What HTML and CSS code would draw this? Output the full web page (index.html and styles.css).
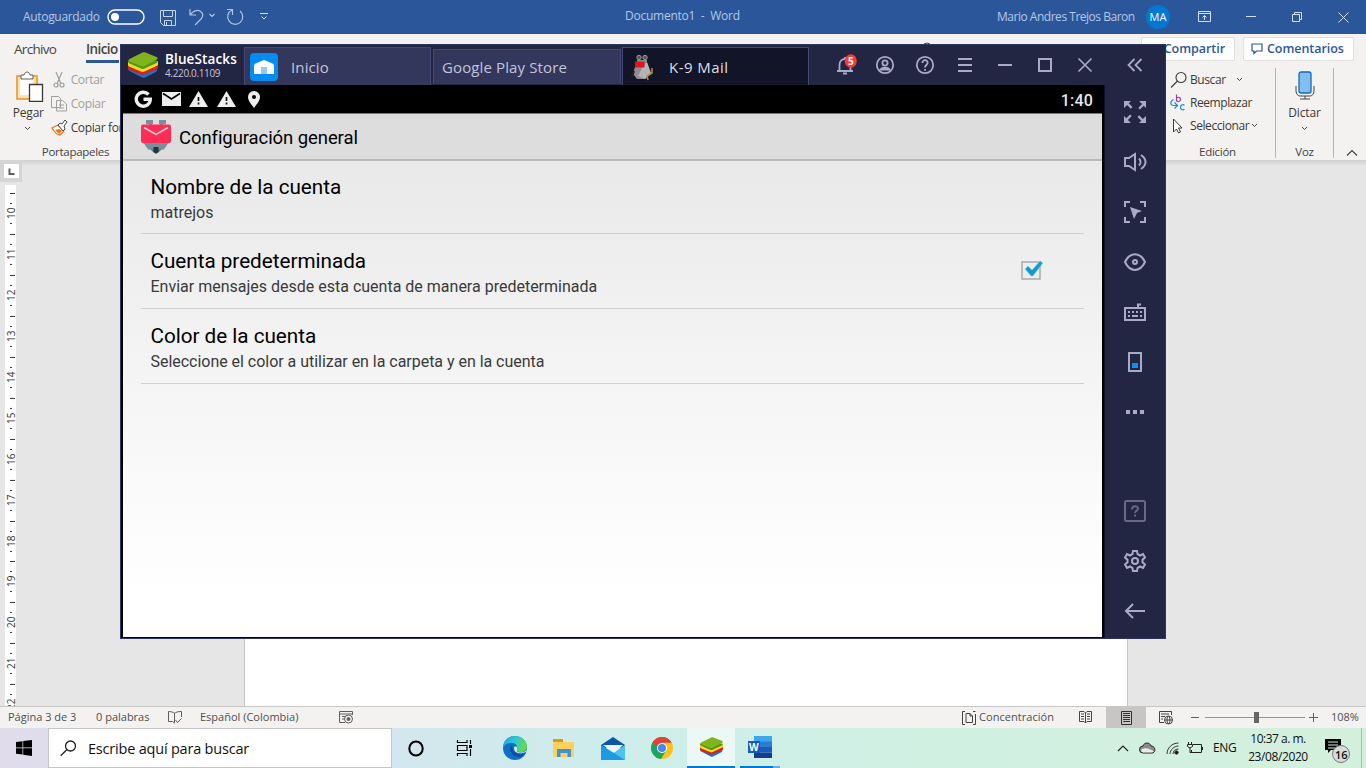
FILE: index.html
```html
<!DOCTYPE html>
<html lang="es">
<head>
<meta charset="utf-8">
<title>Documento1 - Word</title>
<link rel="stylesheet" href="styles.css">
</head>
<body>
<div class="desktop">
  <header class="titlebar">
    <div class="quick">
      <span class="autosave">Autoguardado</span>
      <svg class="toggle" width="39" height="17"><rect x="1" y="1" width="36" height="14" rx="7" fill="none" stroke="#fff" stroke-width="1.4"/><circle cx="8" cy="8" r="4" fill="#fff"/></svg>
      <svg class="save" width="17" height="17" fill="none" stroke="#c5d5ee"><path d="M.5.5h15v15h-12l-3-3zM3.5.5v6h9v-6M4.500 15.500v-5h7v5M6.500 15v-3"/></svg>
      <svg class="undo" width="30" height="18" fill="none" stroke="#aec3e6" stroke-width="1.2"><path d="M1 1v6h6M1.500 6.500C4 3 8 1.500 11 3c4 2.500 3 6 1 8l-6 6M20.500 6l2.500 2.500L25.500 6"/></svg>
      <svg class="redo" width="18" height="18" fill="none" stroke="#aec3e6" stroke-width="1.2"><path d="M1 1.500h5.500v5.500M6 2A7.500 7.500 0 1 0 14 3"/></svg>
      <svg width="10" height="10" fill="none" stroke="#d5e0f2"><path d="M1 1.500h8M2.500 4.500L5 7l2.500-2.500"/></svg>
    </div>
    <div class="doc-title">Documento1 &nbsp;-&nbsp; Word</div>
    <div class="account">
      <span class="user">Mario Andres Trejos Baron</span>
      <span class="avatar">MA</span>
      <svg class="wbtn wb1" width="14" height="12" fill="none" stroke="#d5e0f2"><path d="M.5.500h12v10H.5zM.5 2.500h12M6.500 9V4.500M4.500 6.500l2-2 2 2"/></svg>
      <svg class="wb2" width="11" height="12" stroke="#d5e0f2"><path d="M0 5.500h10"/></svg>
      <svg class="wb3" width="11" height="11" fill="none" stroke="#d5e0f2"><path d="M.5 2.500h7v7h-7zM2.500 2.500v-2h7v7h-2"/></svg>
      <svg width="11" height="11" stroke="#d5e0f2"><path d="M.5.500l10 10M10.500.500l-10 10"/></svg>
    </div>
  </header>

  <section class="ribbon">
    <nav class="tabs">
      <span class="tab file">Archivo</span>
      <span class="tab active">Inicio</span>
      <svg class="search-tip" width="10" height="10" fill="none" stroke="#444"><circle cx="5" cy="5" r="4"/></svg>
      <span class="pill share">Compartir</span>
      <span class="pill comments"><svg width="12" height="12" fill="none" stroke="#2b579a" stroke-width="1.200"><path d="M1 1h10v7H5.500L3 10.500V8H1z"/></svg>Comentarios</span>
    </nav>
    <div class="groups">
      <div class="clipboard">
        <div class="tools">
          <div class="paste">
            <svg width="30" height="31" fill="none"><path d="M2 5h20v23H2z" fill="#fbe3a8" stroke="#e8912d" stroke-width="1.500"/><path d="M5 8h13v16H5z" fill="#fff"/><path d="M6 4h3c1-4 5-4 6 0h3v4H6z" fill="#fff" stroke="#605e5c"/><path d="M14.500 13.500h13v17h-13z" fill="#fff" stroke="#3b3a39" stroke-width="1.300"/></svg>
            <span>Pegar</span>
            <svg width="7" height="5" fill="none" stroke="#444"><path d="M1 1l2.500 2.500L6 1"/></svg>
          </div>
          <div class="clips">
            <div class="clip off"><svg width="18" height="18" fill="none" stroke="#a19f9d" stroke-width="1.200"><path d="M6 1l5 12M12 1L7 13"/><circle cx="6" cy="14" r="2"/><circle cx="12" cy="14" r="2"/></svg><span class="cut">Cortar</span></div>
            <div class="clip off"><svg width="18" height="18" fill="#f3f2f1" stroke="#a19f9d"><path d="M1.500 1.500h7l2 2v9h-9zM6.500 5.500h6l4 3.500v7h-10zM9 10h5M9 13h5"/></svg><span class="cut">Copiar</span></div>
            <div class="clip"><svg width="18" height="18" fill="none"><path d="M2 9l6-3 6 6-4 4c-2 0-5-2-8-7z" fill="#fff" stroke="#e8751a" stroke-width="1.300"/><path d="M5 11l4 4 3-3-3-2z" fill="#e8751a"/><path d="M8 6l2-2 2 1 3-4 2 2-3 4 1 3-2 2z" fill="#fff" stroke="#444"/></svg><span class="cut">Copiar formato</span></div>
          </div>
        </div>
        <div class="caption">Portapapeles</div>
      </div>
      <div class="editing">
        <div class="clip find"><svg width="18" height="18" fill="none" stroke="#3b3a39" stroke-width="1.100"><circle cx="11" cy="6.500" r="5"/><path d="M7.500 10L1 16.500"/></svg>Buscar<svg class="chev" width="7" height="5" fill="none" stroke="#444"><path d="M1 1l2.500 2.500L6 1"/></svg></div>
        <div class="clip repl"><svg width="18" height="18" fill="none"><path d="M6.500.5v7M6.500 4.500c1-2 4-1.500 4 .8 0 2.500-3 3-4 1" stroke="#a33aa8" stroke-width="1.200"/><path d="M14.500 11.200c-2-1.200-4 0-4 2 0 2.200 2 3.300 4 2" stroke="#1e8bcd" stroke-width="1.200"/><path d="M3.500 5.500c-4 2-3 6 0 6h3.500M4.500 8.500l3 3-3 3" stroke="#1e8bcd" stroke-width="1.200"/></svg>Reemplazar</div>
        <div class="clip sel"><svg width="18" height="18" fill="#fff" stroke="#3b3a39"><path d="M3.500 2v13l3-3 2 4 2-1-2-4h3.500z"/></svg>Seleccionar<svg class="chev" width="7" height="5" fill="none" stroke="#444"><path d="M1 1l2.500 2.500L6 1"/></svg></div>
        <div class="caption">Edición</div>
      </div>
      <div class="voice">
        <svg width="20" height="29" fill="none"><rect x="4" y="1" width="12" height="21" rx="2" fill="#83beec" stroke="#0f6cbd" stroke-width="1.300"/><path d="M1 15v5c0 3 2 5 4 5h10c2 0 4-2 4-5v-5M10 25v3M5 28h10" stroke="#444"/></svg>
        <span>Dictar</span>
        <svg class="vchev" width="7" height="5" fill="none" stroke="#444"><path d="M1 1l2.500 2.500L6 1"/></svg>
        <div class="caption">Voz</div>
      </div>
      <svg class="collapse" width="12" height="8" fill="none" stroke="#444" stroke-width="1.200"><path d="M1 6.500l5-5 5 5"/></svg>
    </div>
  </section>

  <main class="canvas">
    <div class="ruler-col">
      <div class="corner"><svg width="15" height="14"><path d="M5.500 4.500v5.500h5" fill="none" stroke="#605e5c" stroke-width="2"/></svg></div>
      <div class="ruler"><i>10</i><i>11</i><i>12</i><i>13</i><i>14</i><i>15</i><i>16</i><i>17</i><i>18</i><i>19</i><i>20</i><i>21</i><i>22</i></div>
    </div>
    <div class="page"></div>
  </main>

  <footer class="status">
    <span class="s-page">Página 3 de 3</span>
    <span class="s-words">0 palabras</span>
    <svg class="s-book" width="15" height="13" fill="none" stroke="#605e5c"><path d="M7 2.500C5 1 3 .5.500.500v10h4l2 1.500V2.500C8 1 10 .5 13.500.500V6M7.500 9l2 2.500 4-4"/></svg>
    <span class="s-lang">Español (Colombia)</span>
    <svg class="s-macro" width="15" height="13" fill="none" stroke="#605e5c"><path d="M6 11.500H.500V.500h13V4M.5 3h13M3 5.500h4M3 8h2"/><circle cx="9.500" cy="8" r="4"/><circle cx="9.500" cy="8" r="1.500" fill="#605e5c"/></svg>
    <svg class="s-focus" width="14" height="14" fill="none" stroke="#444"><path d="M3 .5H.5v13H3M11 .5h2.500M13.500 3v10.500H11M4 2.500h4l2.500 2.500v6.500H4zM8 2.500V5h2.500"/></svg>
    <span class="s-conc">Concentración</span>
    <svg class="s-read" width="14" height="13" fill="none" stroke="#444"><path d="M6.500 2L5 .5H.5v10H5L6.500 12 8 10.500h4.500V.5H8L6.500 2zM6.500 2v10M2 3h3M2 5.500h3M2 8h3M8 3h3M8 5.500h3M8 8h3"/></svg>
    <span class="s-print"><svg width="11" height="14" fill="none" stroke="#333"><path d="M.5.5h10v13H.5zM2 2.500h7M2 4.500h7M2 6.500h7M2 8.500h7M2 10.500h7"/></svg></span>
    <svg class="s-web" width="15" height="14" fill="none" stroke="#444"><path d="M5 11.500H.5V.5h12V4M2 3h8M2 5.500h4M2 8h2"/><circle cx="9.500" cy="9" r="4"/><path d="M5.500 9h8M9.500 5c-2 2-2 6 0 8 2-2 2-6 0-8"/></svg>
    <svg class="s-zoom" width="128" height="14" stroke="#605e5c"><path d="M0 6.500h8M118 6.500h9M122.500 2v9"/><path d="M14 6.500h100" stroke="#979593"/><path d="M63 1h5v11h-5z" fill="#666" stroke="none"/></svg>
    <span class="s-pct">108%</span>
  </footer>

  <footer class="taskbar">
    <span class="start"><svg width="16" height="16" fill="#000"><path d="M0 2l6.500-.8v6.300H0zM7.200 1.100L16 0v7.500H7.200zM0 8.200h6.500v6.300L0 13.700zM7.200 8.200H16V16l-8.800-1.200z"/></svg></span>
    <span class="search"><svg width="17" height="17" fill="none" stroke="#222" stroke-width="1.300"><circle cx="10.500" cy="6" r="5"/><path d="M7 9.500L.7 15.800"/></svg>Escribe aquí para buscar</span>
    <span class="app w48"><svg width="16" height="17"><ellipse cx="8" cy="8.500" rx="6.700" ry="7" fill="none" stroke="#000" stroke-width="2"/></svg></span>
    <span class="app w48"><svg width="17" height="16" fill="none" stroke="#000" stroke-width="1.200"><path d="M1.500 0v2.500h9.500V0M1.500 16v-2.500h9.500V16M1.500 5.500h9.500v5H1.500zM14.500 0v4M14.500 9v7"/><path d="M13 5h3v3h-3z" fill="#000" stroke="none"/></svg></span>
    <span class="app w54"><svg width="24" height="24" viewBox="0 0 24 24"><defs><linearGradient id="eg" x1="0" y1="0" x2="1" y2=".4"><stop offset="0" stop-color="#1a9fd9"/><stop offset=".5" stop-color="#2fc3df"/><stop offset="1" stop-color="#5fdc4e"/></linearGradient></defs><circle cx="12" cy="12" r="12" fill="#0f6fc5"/><path d="M0 12C0 4 6 0 12 0c7 0 12 5 12 10 0 4-3 6-6 6s-5-1-4-3c1-3-1-6-6-6-4 0-7 2-8 5z" fill="url(#eg)"/><path d="M9 9c-4 3-2 11 7 12 3 0 5-2 7-5-2 2-5 3-8 2-4-1-6-4-6-9z" fill="#0b4f9e"/><path d="M11 12c0 4 4 7 12 4l1-3c-1 2-3 3.500-6 3.500s-5-1-4-3.500c.6-2-.5-2.500-1.500-2.500S11 11 11 12z" fill="#d2efec"/></svg></span>
    <span class="app w44"><svg width="22" height="19"><path d="M0 1h9l2 2h10v15H0z" fill="#fdd15c"/><path d="M0 0h10v3H0z" fill="#d99b10"/><path d="M4 18v-8h14v8h-3.500v-4h-7v4z" fill="#3f93d4"/></svg></span>
    <span class="app w54"><svg width="24" height="23"><path d="M0 8l12-8 12 8v3H0z" fill="#0a56a8"/><path d="M2 8h20l-9 9z" fill="#f3f3f3"/><path d="M0 8l13 8L24 8v15H0z" fill="#1c9ae3"/><path d="M13 16L24 8v15z" fill="#4cc4f1"/></svg></span>
    <span class="app w44"><svg width="22" height="22" viewBox="0 0 22 22"><circle cx="11" cy="11" r="11" fill="#fbc116"/><path d="M11 11L1.500 5.500A11 11 0 0 1 20.500 5.500H11z" fill="#dc4437"/><path d="M11 11L1.500 5.500A11 11 0 0 0 10 22l5-8.500z" fill="#1fa463"/><path d="M1.500 5.500A11 11 0 0 1 20.500 5.500H11c-3 0-5 2-5.500 4z" fill="#dc4437"/><circle cx="11" cy="11" r="5" fill="#fff"/><circle cx="11" cy="11" r="4" fill="#4688f1"/></svg></span>
    <span class="app current"><svg width="23" height="20" viewBox="0 0 30 26"><use href="#bs"/></svg></span>
    <span class="app wordapp"><svg width="24" height="22"><path d="M6 0h18v6H6z" fill="#41a5ee"/><path d="M6 5.500h18V11H6z" fill="#2b7cd3"/><path d="M6 11h18v5.500H6z" fill="#185abd"/><path d="M6 16.500h18V22H6z" fill="#103f91"/><path d="M0 5h12v12H0z" fill="#185abd"/><text x="1" y="14.800" class="w">W</text></svg></span>
    <div class="tray">
      <svg class="t-up" width="12" height="8" fill="none" stroke="#222" stroke-width="1.200"><path d="M1 7l5-5 5 5"/></svg>
      <svg class="t-cloud" width="17" height="12"><path d="M4 11a3.500 3.500 0 0 1 0-7C5 0 11 0 12 4c5 0 5 7 1 7z" fill="#8b8b8b" stroke="#222"/><path d="M4 10.500c-3-1-2-4 1-4 3-1 7 1 10 3l-2 1z" fill="#e5eeea"/></svg>
      <svg class="t-wifi" width="13" height="13" fill="none" stroke="#333"><path d="M1 12C1 6 6 1 12.500 1M4 12c0-4 4-8 8.500-8M7 12c0-3 2-5 5.500-5"/><circle cx="10.500" cy="10.500" r="1.700" fill="#111"/></svg>
      <svg class="t-bat" width="17" height="12" fill="none" stroke="#222"><path d="M6 2.500h8.500v8H4.500V8M15.500 5v3M1.500 0v2.500M4.500 0v2.500M.5 2.500h5v2L3 6 .5 4.500zM3 6v4.500h2"/></svg>
      <span class="t-lang">ENG</span>
      <span class="clock"><span>10:37 a. m.</span><span class="date">23/08/2020</span></span>
      <svg class="t-note" width="27" height="26"><path d="M0 1h16v11H6l-3 3v-3H0z" fill="#000"/><path d="M3 4h10M3 7h10M3 10h7" stroke="#d3f0df"/><circle cx="16" cy="16" r="8.500" fill="#d7dcd9" stroke="#777"/><text x="10" y="20.500" class="n">16</text></svg>
    </div>
  </footer>
</div>

<div class="emulator">
  <div class="em-head">
    <svg class="logo" width="30" height="26" viewBox="0 0 30 26"><g id="bs"><path d="M0 15.500L14.500 20 29 14v4c0 1-.5 1.500-1 2l-11 5.500c-1 .5-2 .5-3 0L1.500 19C.5 18.500 0 17 0 15.500z" fill="#1675c9"/><path d="M0 13l14.500 5L30 12v3.500c0 1-.5 1.500-1 1.800L16.500 22.500c-1 .5-2.500.5-3.500 0L1 17.500c-.6-.4-1-1-1-2z" fill="#d7201f"/><path d="M0 9.500L14.500 15 30 9v3c0 1-.5 1.500-1 1.800L16.500 19.500c-1 .5-2.500.5-3.500 0L1 14.500c-.6-.4-1-1-1-2z" fill="#ffd91a"/><path d="M0 9.500L1 8l28 .5c.8 1 .6 2-.4 2.500L16.500 16.500c-1 .5-2.500.5-3.500 0L1.500 11.500C.6 11 0 10.300 0 9.500z" fill="#4c9a20"/><path d="M14 .8c1-.5 2.500-.6 3.500-.2L28.500 5c1.500.7 1.500 2 0 2.800L16.500 14c-1 .5-2.500.5-3.500 0L1.500 9.500C.2 8.800.2 7.800 1.500 7z" fill="#80b41c"/></g></svg>
    <div class="brand"><b>BlueStacks</b><small>4.220.0.1109</small></div>
    <div class="et home"><svg width="28" height="28"><rect width="28" height="28" rx="4" fill="#058cf0"/><path d="M4 13c0-1.500.5-2 1.500-2.500L14 7l8.500 3.500c1 .5 1.500 1 1.500 2.500v8H4z" fill="#fff"/><path d="M11 14h6v7h-6z" fill="#8fcbf8"/></svg>Inicio</div>
    <div class="et store">Google Play Store</div>
    <div class="et k9"><svg width="23" height="27"><path d="M5 9h11l4 11-6 5H6L2 20z" fill="#8d8d8d"/><path d="M11 14l5-6 4 11-6 6-7-3z" fill="#b4b4b4"/><circle cx="8" cy="3.500" r="2.200" fill="#555" stroke="#999"/><circle cx="14" cy="3.500" r="2.200" fill="#555" stroke="#999"/><path d="M6 6h10v3H6z" fill="#888"/><path d="M4 7.500h9.500v6H4z" fill="#e01320"/><path d="M3 17l-2 6" stroke="#222" stroke-width="2"/><path d="M21 14v5l-5 3 1 4" fill="none" stroke="#b98a3a" stroke-width="1.500"/></svg>K-9 Mail</div>
    <div class="em-icons">
      <svg width="40" height="26" viewBox="-20 -13 40 26" fill="none" stroke="#a9aac9" stroke-width="1.800"><path d="M-8 6H8M-5.500 6v-6c0-8 11-8 11 0v6M0-8v2"/><path d="M-2 8.500h4" stroke-width="2"/><ellipse cx="5.800" cy="-4" rx="6" ry="6.800" fill="#fb3b32" stroke="none"/><text x="2.900" y="-.4" class="five">5</text></svg>
      <svg width="40" height="20" viewBox="-20 -10 40 20" fill="none" stroke="#a9aac9" stroke-width="1.800"><circle r="8.200"/><circle cy="-2" r="2.600"/><path d="M-4.500 4.500C-3 2 3 2 4.500 4.500z"/></svg>
      <svg width="40" height="20" viewBox="-20 -10 40 20" fill="none" stroke="#a9aac9" stroke-width="1.800"><circle r="8.200"/><path d="M-2.600-2c0-4 5.500-3.500 5.200 0C2.500 0 0 0 0 2.500M0 4v1.800"/></svg>
      <svg width="40" height="20" viewBox="-20 -10 40 20" stroke="#a9aac9" stroke-width="2"><path d="M-7-6H7M-7 0H7M-7 6H7"/></svg>
      <svg width="40" height="20" viewBox="-20 -10 40 20" stroke="#a9aac9" stroke-width="2"><path d="M-7 0H7"/></svg>
      <svg width="40" height="20" viewBox="-20 -10 40 20" fill="none" stroke="#a9aac9" stroke-width="2"><path d="M-6-6H6V6H-6z"/></svg>
      <svg width="40" height="20" viewBox="-20 -10 40 20" stroke="#a9aac9" stroke-width="1.600"><path d="M-6.500-6.500l13 13M6.500-6.500l-13 13"/></svg>
      <svg class="fold" width="40" height="20" viewBox="-20 -10 40 20" fill="none" stroke="#a9aac9" stroke-width="1.800"><path d="M-.5-6l-6 6 6 6M6.500-6l-6 6 6 6"/></svg>
    </div>
  </div>
  <div class="em-body">
    <div class="screen">
      <div class="android-status">
        <svg class="a-g" width="19" height="19" fill="none" stroke="#eee" stroke-width="3.400"><path d="M14.500 4.500A7 7 0 1 0 16.300 9.300H9.500"/></svg>
        <svg class="a-mail" width="20" height="15"><path d="M0 0h19v14H0z" fill="#eee"/><path d="M1 1.500l8.500 5.500L18 1.500" fill="none" stroke="#000" stroke-width="1.700"/></svg>
        <svg class="a-warn" width="19" height="17"><path d="M9.500 0L19 16H0z" fill="#eee"/><path d="M9.500 6v4M9.500 11.500v2" stroke="#111" stroke-width="1.700"/></svg>
        <svg class="a-warn" width="19" height="17"><path d="M9.500 0L19 16H0z" fill="#eee"/><path d="M9.500 6v4M9.500 11.500v2" stroke="#111" stroke-width="1.700"/></svg>
        <svg width="12" height="18"><path d="M6 0a6 6 0 0 1 6 6c0 4-4 8-6 11C4 14 0 10 0 6a6 6 0 0 1 6-6z" fill="#eee"/><circle cx="6" cy="6" r="2" fill="#000"/></svg>
        <span class="a-time">1:40</span>
      </div>
      <div class="action-bar">
        <svg width="30" height="35"><path d="M5 1h7v4h-1v2H8V5H5zM18 1h7v4h-3v2h-3V5h-1z" fill="#78909c"/><path d="M2 23h26l-5 7.500H7z" fill="#78909c"/><rect y="5.500" width="30" height="18.500" rx="2" fill="#ff2d55"/><path d="M3 8.500l12 7 12-7" fill="none" stroke="#ffd5dc" stroke-width="1.500"/><path d="M9 30h12l-4 4h-4z" fill="#607d8b"/><path d="M12.500 28h5v4.500L15 35l-2.500-2.500z" fill="#263238"/></svg>
        <span>Configuración general</span>
      </div>
      <div class="prefs">
        <div class="pref first"><div><h2>Nombre de la cuenta</h2><p class="p1">matrejos</p></div></div>
        <div class="pref"><div><h2 class="h2b">Cuenta predeterminada</h2><p>Enviar mensajes desde esta cuenta de manera predeterminada</p></div>
          <svg class="check" width="26" height="24"><path d="M3 5h18v17H3z" fill="#eee" stroke="#aaa" stroke-width="1.500"/><path d="M6 12l3-3 4 4 8-9 3 2-10 13h-2z" fill="#159bcb" stroke="#94d9ef" stroke-width=".6"/></svg></div>
        <div class="pref"><div><h2>Color de la cuenta</h2><p class="p3">Seleccione el color a utilizar en la carpeta y en la cuenta</p></div></div>
      </div>
    </div>
    <aside class="side">
      <svg viewBox="-25 -25 50 50"><path d="M-11-11h7l-2.300 2.300 3.800 3.800-1.600 1.600-3.800-3.800L-11-4zM11-11v7L8.700-6.300 4.900-2.500 3.300-4.100l3.800-3.800L4-11zM-11 11V4l2.300 2.300 3.800-3.800 1.600 1.600-3.800 3.800L-4 11zM11 11H4l2.300-2.300L2.500 4.900l1.600-1.600 3.800 3.800L11 4z"/></svg>
      <svg viewBox="-25 -25 50 50" class="ln"><path d="M-10-4h4l6-4V8l-6-4h-4zM4-3.500c2 2 2 5 0 7M6-7c6 4 6 10 0 14"/></svg>
      <svg viewBox="-25 -25 50 50"><path d="M-10-5v-5h5M5-10h5v5M10 5v5H5M-5 10h-5V5" class="l"/><path d="M-5-5L7-1 2 1-1 7z"/></svg>
      <svg viewBox="-25 -25 50 50" class="ln"><path d="M-10 0C-5-10.500 5-10.500 10 0 5 10.500-5 10.500-10 0z"/><circle r="2"/></svg>
      <svg viewBox="-25 -25 50 50"><path d="M-10-4h20V8h-20zM3-4v-3.500h3" class="l"/><path d="M-7-1h2v2h-2zM-3-1h2v2h-2zM1-1h2v2H1zM5-1h2v2H5zM-7 3h2v2h-2zM-3 3h6v2h-6zM5 3h2v2H5z"/></svg>
      <svg viewBox="-25 -25 50 50"><path d="M-6-9H6V9H-6z" class="l"/><path d="M-3 1h6v5h-6z" fill="#0793f5"/></svg>
      <svg viewBox="-25 -25 50 50"><path d="M-9-2h4v4h-4zM-2-2h4v4h-4zM5-2h4v4H5z"/></svg>
      <svg viewBox="-25 -25 50 50" class="dim low"><rect x="-10" y="-10" width="20" height="20" rx="1.500" class="l"/><path d="M-3-1.500c0-4.500 6-4 6-1C3-.5 0 0 0 2M0 3.500v2" class="l"/></svg>
      <svg viewBox="-25 -25 50 50" class="ln"><circle r="3"/><path d="M-2-10h4l.6 3.200 2.400 1.300L8-7l2 3.500L7.500-1.300v2.600L10 3.500 8 7 5 5.500 2.600 6.800 2 10h-4l-.6-3.200L-5 5.500-8 7l-2-3.500 2.500-2.200v-2.600L-10-3.500-8-7l3 1.500 2.400-1.300z"/></svg>
      <svg viewBox="-25 -25 50 50" class="ln"><path d="M10 0H-9M-2-7l-7 7 7 7"/></svg>
    </aside>
  </div>
</div>
</body>
</html>
```

FILE: styles.css
```css
* { box-sizing: border-box; }
body { margin: 0; width: 1366px; height: 768px; overflow: hidden; font: 12px/16px "Open Sans", "Noto Sans", sans-serif; color: #3b3a39; white-space: nowrap; }
svg { display: block; flex: none; }
.desktop { display: flex; flex-direction: column; height: 768px; }

.titlebar { height: 34px; background: #2b579a; color: #b4c7e7; display: grid; grid-template-columns: 625px 372px 1fr; align-items: center; }
.quick, .account { display: flex; align-items: center; }
.quick { padding-left: 23px; }
.autosave { width: 84px; letter-spacing: -.32px; }
.toggle { margin-right: 14px; }
.save { margin-right: 12px; margin-top: 2px; }
.undo { margin-right: 7px; }
.redo { margin-right: 15px; }
.doc-title { margin-top: -3px; letter-spacing: -.25px; }
.user { width: 149px; letter-spacing: -.48px; }
.avatar { width: 24px; height: 24px; border-radius: 50%; background: #0078d4; color: #fff; font-size: 11px; line-height: 24px; text-align: center; }
.wb1 { margin-left: 28px; margin-right: 34px; }
.wb2 { margin-right: 35px; }
.wb3 { margin-right: 35px; }

.ribbon { height: 126px; background: #f3f2f1; display: flex; flex-direction: column; }
.tabs { height: 30px; display: flex; align-items: center; color: #444; font-size: 13.500px; }
.tab { height: 28px; line-height: 29px; letter-spacing: -.6px; margin-top: -1px; }
.file { width: 72px; padding-left: 14px; margin-right: 14px; letter-spacing: -.68px; }
.active { width: 33px; font-weight: 600; border-bottom: 3px solid #2b579a; }
.search-tip { margin: 0 0 0 803px; align-self: flex-start; padding: 0; margin-top: 8px; }
.pill { height: 24px; background: #fff; border: 1px solid #e1dfdd; border-radius: 2px; color: #2b579a; font-weight: 600; font-size: 12.500px; line-height: 20px; letter-spacing: -.05px; display: flex; align-items: center; }
.share { width: 94px; margin-left: auto; justify-content: flex-end; padding-right: 9px; }
.comments { width: 111px; margin: 0 12px 0 8px; padding-left: 7px; gap: 4px; }
.groups { display: flex; height: 96px; padding-top: 3px; }
.clipboard { width: 151px; }
.tools { display: flex; height: 77px; }
.paste { width: 53px; padding: 4px 0 0 5px; display: flex; flex-direction: column; align-items: center; }
.paste > svg:first-child { margin-left: 6px; }
.paste span { margin: 3px 0 5px 2px; letter-spacing: -.2px; }
.clips { padding-top: 1px; }
.clip { display: flex; align-items: center; height: 24px; gap: 2px; letter-spacing: -.35px; }
.cut { padding-left: 1px; }
.off { color: #a19f9d; }
.caption { color: #444; text-align: center; font-size: 11.500px; letter-spacing: -.28px; }
.editing { margin-left: auto; width: 106px; height: 90px; margin-top: 1px; border-right: 1px solid #b5b3b1; }
.editing .clip { height: 23px; letter-spacing: -.42px; }
.editing .caption { margin: 7px 0 0 -10px; }
.find .chev { margin-left: 8px; }
.voice { width: 58px; height: 90px; margin-top: 1px; border-right: 1px solid #b5b3b1; display: flex; flex-direction: column; align-items: center; padding-top: 3px; }
.voice span { margin: 5px 0; letter-spacing: -.1px; }
.voice .caption { margin-top: 13px; }
.collapse { margin: 82px 8px 0 12px; }

.canvas { flex: 1; min-height: 0; background: linear-gradient(#cfcfcf, #e6e6e6 6px); display: flex; overflow: hidden; }
.ruler-col { width: 245px; }
.corner { width: 22px; height: 22px; background: #d5d5d5; display: flex; align-items: center; justify-content: center; }
.corner svg { background: #fff; }
.ruler { margin: 3px 0 0 5px; width: 11px; height: 530px; background: #fff; padding-top: 8px; }
.ruler i { display: flex; align-items: center; justify-content: center; height: 40.950px; width: 11px; font: 10px/9px "Open Sans", sans-serif; color: #333; writing-mode: vertical-rl; transform: rotate(180deg); padding-right: 2px; background: linear-gradient(#333, #333) 4px 10px / 2px 1px no-repeat, linear-gradient(#333, #333) 4px 30px / 2px 1px no-repeat, linear-gradient(#333, #333) 1px 100% / 5px 1px no-repeat; }
.page { width: 884px; background: #fff; border: solid #c6c6c6; border-width: 0 1px; margin-left: -1px; }

.status { height: 22px; background: #f3f2f1; border-top: 1px solid #c8c6c4; display: flex; align-items: center; font-size: 11px; color: #505050; padding-left: 8px; }
.status > span:not(.s-print) { margin-top: -2px; }
.s-page { width: 88px; }
.s-words { width: 72px; }
.s-book { margin-right: 17px; }
.s-lang { width: 139px; }
.s-macro { margin-right: 608px; }
.s-focus { margin-right: 3px; }
.s-conc { width: 100px; letter-spacing: .05px; }
.s-read { margin-right: 13px; }
.s-print { width: 40px; height: 21px; background: #c8c6c4; display: flex; align-items: center; justify-content: center; margin-right: 13px; }
.s-web { margin-right: 17px; }
.s-zoom { margin-right: 12px; }

.taskbar { height: 40px; display: flex; align-items: center; color: #111; background: linear-gradient(90deg, #e0dcec 0, #dce1ee 240px, #d3e7ee 400px, #cdeeea 660px, #d0f0e3 900px, #d4f0dd); }
.start { width: 48px; display: flex; justify-content: center; }
.search { width: 344px; height: 40px; background: #fff; border: 1px solid #c5c5c5; display: flex; align-items: center; gap: 11px; padding: 1px 0 0 11px; font-size: 14.500px; letter-spacing: -.2px; }
.app { height: 40px; display: flex; align-items: center; justify-content: center; }
.w48 { width: 48px; }
.w54 { width: 54px; }
.w44 { width: 44px; }
.current { width: 48px; margin: 0 5px 0 3px; background: #ebf8f6; border-bottom: 2px solid #0078d7; }
.wordapp { width: 40px; border-bottom: 2px solid #0078d7; border-image: linear-gradient(90deg, #0078d7 80%, #65aee5 80%) 2; border-width: 0 0 2px; }
.w { font: 700 10px "Open Sans", sans-serif; fill: #fff; }
.tray { margin-left: auto; margin-right: 4px; padding-right: 9px; height: 40px; display: flex; align-items: center; border-right: 1px solid #a8b8b0; }
.t-up { margin-right: 10px; }
.t-cloud { margin-right: 10px; }
.t-wifi { margin-right: 8px; }
.t-bat { margin-right: 9px; }
.t-note { margin-top: 6px; }
.t-lang { width: 29px; letter-spacing: -.4px; }
.clock { width: 72px; margin-right: 11px; display: flex; flex-direction: column; align-items: center; line-height: 18px; letter-spacing: -.5px; }
.date { letter-spacing: -.4px; }
.n { font: 600 11px "Open Sans", sans-serif; fill: #111; }

.emulator { position: absolute; left: 120px; top: 44px; width: 1046px; height: 595px; background: #232642; border: 1px solid #303463; display: flex; flex-direction: column; }
.em-head { height: 40px; display: flex; align-items: flex-start; color: #c3c4dc; }
.logo { margin: 7px 7px 0; }
.brand { width: 79px; padding-top: 6px; display: flex; flex-direction: column; color: #fff; }
.brand b { font-size: 13.500px; line-height: 17px; font-weight: 600; letter-spacing: .12px; }
.brand small { font-size: 10px; line-height: 10px; color: #c3c4dc; letter-spacing: -.35px; }
.et { width: 187px; height: 39px; margin-top: 2px; background: #34375c; border: 1px solid #454872; border-bottom: 0; display: flex; align-items: center; font-size: 15px; letter-spacing: .12px; }
.home { padding-left: 5px; gap: 13px; }
.store { width: 188px; height: 35px; margin: 4px 1px 0 2px; padding-left: 8px; }
.k9 { background: #121428; color: #dddde9; padding-left: 8px; gap: 15px; letter-spacing: .45px; }
.em-icons { display: flex; align-items: center; height: 40px; margin-left: 16px; }
.fold { margin-left: 10px; }
.five { font: 700 10px "Open Sans", sans-serif; fill: #fff; stroke: none; }
.em-body { display: flex; flex: 1; }
.screen { width: 983px; background: #000; padding: 1px 2px 1px 2px; font-family: Roboto, sans-serif; color: #000; display: flex; flex-direction: column; }
.android-status { height: 27px; padding: 0 9px 0 11px; display: flex; align-items: center; }
.a-g { margin-right: 9px; }
.a-mail { margin-right: 7px; }
.a-warn { margin-right: 9px; }
.a-warn + .a-warn { margin-right: 12px; }
.a-time { margin-left: auto; color: #e6e6e6; font-size: 16px; font-weight: 500; letter-spacing: .2px; padding-top: 2px; }
.action-bar { height: 48px; background: #ddd; border-top: 1px solid #777; border-bottom: 2px solid #b9b9b9; display: flex; align-items: center; padding-left: 18px; gap: 8px; font-size: 18.500px; letter-spacing: -.08px; }
.action-bar span { padding-top: 2px; }
.prefs { flex: 1; padding: 0 18px; background: linear-gradient(#e9e9e9, #f5f5f5 48%, #fff 92%); }
.pref { height: 75px; border-bottom: 1px solid #cfcfcf; display: flex; justify-content: space-between; align-items: center; padding: 4px 39px 0 9.500px; }
.pref.first { height: 73px; padding-top: 5px; }
.pref h2 { margin: 0; font-size: 20.700px; line-height: 26px; font-weight: 400; letter-spacing: -.02px; }
.pref p { margin: 0; font-size: 16px; line-height: 25px; color: #3a3a3a; }
.check { margin-bottom: 9px; }
.p3 { letter-spacing: -.03px; }
.side { width: 61px; padding: 2px 0 0 5px; fill: #a9aac9; border-left: 1px solid #11132a; }
.side svg { width: 50px; height: 50px; }
.side .l, .side .ln { fill: none; stroke: #a9aac9; stroke-width: 2; }
.side .dim { opacity: .5; }
.side .low { margin-top: 49px; }
```
